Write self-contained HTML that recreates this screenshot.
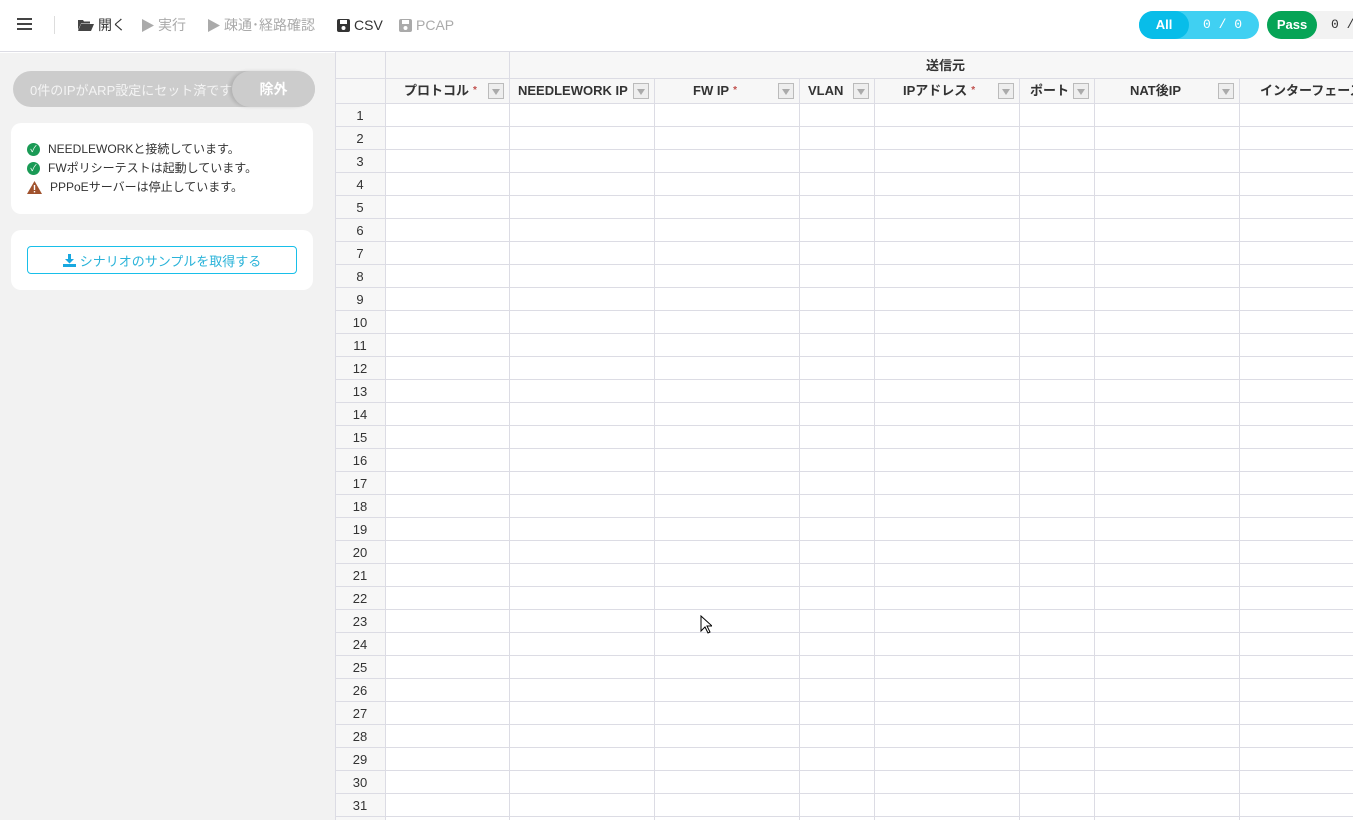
<!DOCTYPE html>
<html><head><meta charset="utf-8"><style>
*{box-sizing:border-box;margin:0;padding:0}
html,body{overflow:hidden}
body{width:1353px;height:820px;overflow:hidden;background:#fff;font-family:"Liberation Sans","Noto Sans CJK JP",sans-serif;font-size:13px;color:#333;position:relative}
.hdr{position:absolute;left:0;top:0;width:1353px;height:52px;background:#fff;border-bottom:1px solid #dcdce4}
.tb{position:absolute;top:14px;height:22px;font-size:14px;display:flex;align-items:center;gap:4px;white-space:nowrap;line-height:22px}
.dis{color:#aaa}
.side{position:absolute;left:0;top:53px;width:335px;height:767px;background:#f2f2f2}
.pill{position:absolute;left:13px;top:18px;width:302px;height:36px;border-radius:18px;background:#ccc;color:#f4f4f4;font-size:13px}
.card{position:absolute;left:11px;background:#fff;border-radius:10px;width:302px}
.g{position:absolute;left:335px;top:52px;width:1018px;height:768px;background:#fff;overflow:hidden}
.v{position:absolute;top:0;width:1px;height:768px;background:#dcdce4}
.hc{position:absolute;top:28px;height:22px;display:flex;align-items:center;font-size:13px;font-weight:bold;color:#333;white-space:nowrap;line-height:22px}
.dd{position:absolute;top:31px;width:16px;height:16px;border:1px solid #bbb;background:#eee}
.dd:after{content:"";position:absolute;left:3px;top:5px;border-left:4px solid transparent;border-right:4px solid transparent;border-top:6px solid #aaa}
.st{color:#c0504d;font-size:10px;margin-left:4px}
.mono{font-family:'Liberation Mono',monospace;font-size:13px;white-space:nowrap}
</style></head><body>
<div class="hdr">
 <div style="position:absolute;left:17px;top:18px;width:15px;height:2px;background:#444;box-shadow:0 5px 0 #444,0 10px 0 #444"></div>
 <div style="position:absolute;left:54px;top:16px;width:1px;height:18px;background:#ddd"></div>
 <div class="tb" style="left:78px;color:#333"><svg width="16" height="12" viewBox="0 0 16 12"><path d="M0 1h5l1 1.5h6v2H3L0 11z" fill="#444"/><path d="M3 5h13l-3 7H0z" fill="#444"/></svg>開く</div>
 <div class="tb dis" style="left:142px"><svg width="12" height="13" viewBox="0 0 12 13"><path d="M0 0L12 6.5 0 13z" fill="#aaa"/></svg>実行</div>
 <div class="tb dis" style="left:208px"><svg width="12" height="13" viewBox="0 0 12 13"><path d="M0 0L12 6.5 0 13z" fill="#aaa"/></svg>疎通･経路確認</div>
 <div class="tb" style="left:337px"><svg width="13" height="13" viewBox="0 0 13 13"><rect width="13" height="13" rx="2" fill="#333"/><rect x="3" y="1" width="7" height="4" fill="#fff"/><circle cx="6.5" cy="9" r="2" fill="#fff"/></svg>CSV</div>
 <div class="tb dis" style="left:399px"><svg width="13" height="13" viewBox="0 0 13 13"><rect width="13" height="13" rx="2" fill="#aaa"/><rect x="3" y="1" width="7" height="4" fill="#fff"/><circle cx="6.5" cy="9" r="2" fill="#fff"/></svg>PCAP</div>
 <div style="position:absolute;left:1139px;top:11px;width:120px;height:28px;border-radius:14px;background:#40d0f2"></div>
 <div style="position:absolute;left:1139px;top:11px;width:50px;height:28px;border-radius:14px;background:#08bde9;color:#fff;font-size:13px;text-align:center;line-height:28px;font-weight:bold">All</div>
 <div class="mono" style="position:absolute;left:1203px;top:11px;line-height:28px;color:#fff">0 / 0</div>
 <div style="position:absolute;left:1267px;top:11px;width:100px;height:28px;border-radius:14px;background:#f2f2f2"></div>
 <div style="position:absolute;left:1267px;top:11px;width:50px;height:28px;border-radius:14px;background:#06a456;color:#fff;font-size:13px;text-align:center;line-height:28px;font-weight:bold">Pass</div>
 <div class="mono" style="position:absolute;left:1331px;top:11px;line-height:28px;color:#333">0 /</div>
</div>
<div class="side">
 <div class="pill"><span style="position:absolute;left:17px;top:9px">0件のIPがARP設定にセット済です</span>
  <div style="position:absolute;left:219px;top:0;width:83px;height:36px;border-radius:18px;background:#ccc;box-shadow:-3px 0 3px rgba(0,0,0,.12);color:#fff;font-weight:bold;text-align:center;line-height:36px;font-size:14px">除外</div></div>
 <div class="card" style="top:70px;height:91px;font-size:12px;color:#333">
  <div style="position:absolute;left:16px;top:17px;line-height:19px">
   <div style="display:flex;align-items:center;height:19px"><span style="display:inline-block;width:13px;height:13px;border-radius:50%;background:#1a9a55;color:#fff;font-size:9px;text-align:center;line-height:13px;margin-right:8px">✓</span>NEEDLEWORKと接続しています。</div>
   <div style="display:flex;align-items:center;height:19px"><span style="display:inline-block;width:13px;height:13px;border-radius:50%;background:#1a9a55;color:#fff;font-size:9px;text-align:center;line-height:13px;margin-right:8px">✓</span>FWポリシーテストは起動しています。</div>
   <div style="display:flex;align-items:center;height:19px"><svg width="15" height="13" viewBox="0 0 15 13" style="margin-right:8px"><path d="M7.5 0L15 13H0z" fill="#a0522d"/><rect x="6.8" y="4" width="1.4" height="5" fill="#fff"/><rect x="6.8" y="10" width="1.4" height="1.4" fill="#fff"/></svg>PPPoEサーバーは停止しています。</div>
  </div></div>
 <div class="card" style="top:177px;height:60px">
  <div style="position:absolute;left:16px;top:16px;width:270px;height:28px;border:1px solid #18bfe9;border-radius:4px;color:#2ab3d9;font-size:13px;display:flex;align-items:center;justify-content:center"><svg width="13" height="13" viewBox="0 0 13 13" style="margin-right:4px"><path d="M5 0h3v5h3L6.5 9.5 2 5h3z" fill="#18a8e0"/><rect x="0" y="10" width="13" height="3" fill="#18a8e0"/></svg>シナリオのサンプルを取得する</div></div>
</div>
<div class="g">
 <div style="position:absolute;left:0;top:0;width:1018px;height:52px;background:#f7f7f7"></div>
 <div style="position:absolute;left:0;top:52px;width:50px;height:716px;background:#f7f7f7"></div>
 <div style="position:absolute;left:0;top:26px;width:1018px;height:1px;background:#dcdce4"></div>
 <div style="position:absolute;left:0;top:52px;width:1018px;height:716px;background:repeating-linear-gradient(to bottom,transparent 0,transparent 22px,#dcdce4 22px,#dcdce4 23px)"></div>
 <div style="position:absolute;left:0;top:51px;width:1018px;height:1px;background:#dcdce4"></div>
 <div class="v" style="left:0"></div><div class="v" style="left:50px"></div>
 <div class="v" style="left:174px"></div>
 <div class="v" style="left:319px;top:27px"></div><div class="v" style="left:464px;top:27px"></div>
 <div class="v" style="left:539px;top:27px"></div><div class="v" style="left:684px;top:27px"></div>
 <div class="v" style="left:759px;top:27px"></div><div class="v" style="left:904px;top:27px"></div>
 <div class="hc" style="left:591px;top:3px">送信元</div>
 <div class="hc" style="left:69px">プロトコル<span class="st">*</span></div><div class="dd" style="left:153px"></div>
 <div class="hc" style="left:183px">NEEDLEWORK IP</div><div class="dd" style="left:298px"></div>
 <div class="hc" style="left:358px">FW IP<span class="st">*</span></div><div class="dd" style="left:443px"></div>
 <div class="hc" style="left:473px">VLAN</div><div class="dd" style="left:518px"></div>
 <div class="hc" style="left:568px">IPアドレス<span class="st">*</span></div><div class="dd" style="left:663px"></div>
 <div class="hc" style="left:695px">ポート</div><div class="dd" style="left:738px"></div>
 <div class="hc" style="left:795px">NAT後IP</div><div class="dd" style="left:883px"></div>
 <div class="hc" style="left:925px">インターフェース</div>
 <div style="position:absolute;left:0;top:52px;width:50px;text-align:center;line-height:23px;font-size:13px;color:#333">1<br>2<br>3<br>4<br>5<br>6<br>7<br>8<br>9<br>10<br>11<br>12<br>13<br>14<br>15<br>16<br>17<br>18<br>19<br>20<br>21<br>22<br>23<br>24<br>25<br>26<br>27<br>28<br>29<br>30<br>31</div>
</div>
<svg style="position:absolute;left:700px;top:615px" width="12" height="19" viewBox="0 0 12 19"><path d="M1 1v15l4-4 3 6 2-1-3-6h5z" fill="#fff" stroke="#000" stroke-width="1"/></svg>
</body></html>
